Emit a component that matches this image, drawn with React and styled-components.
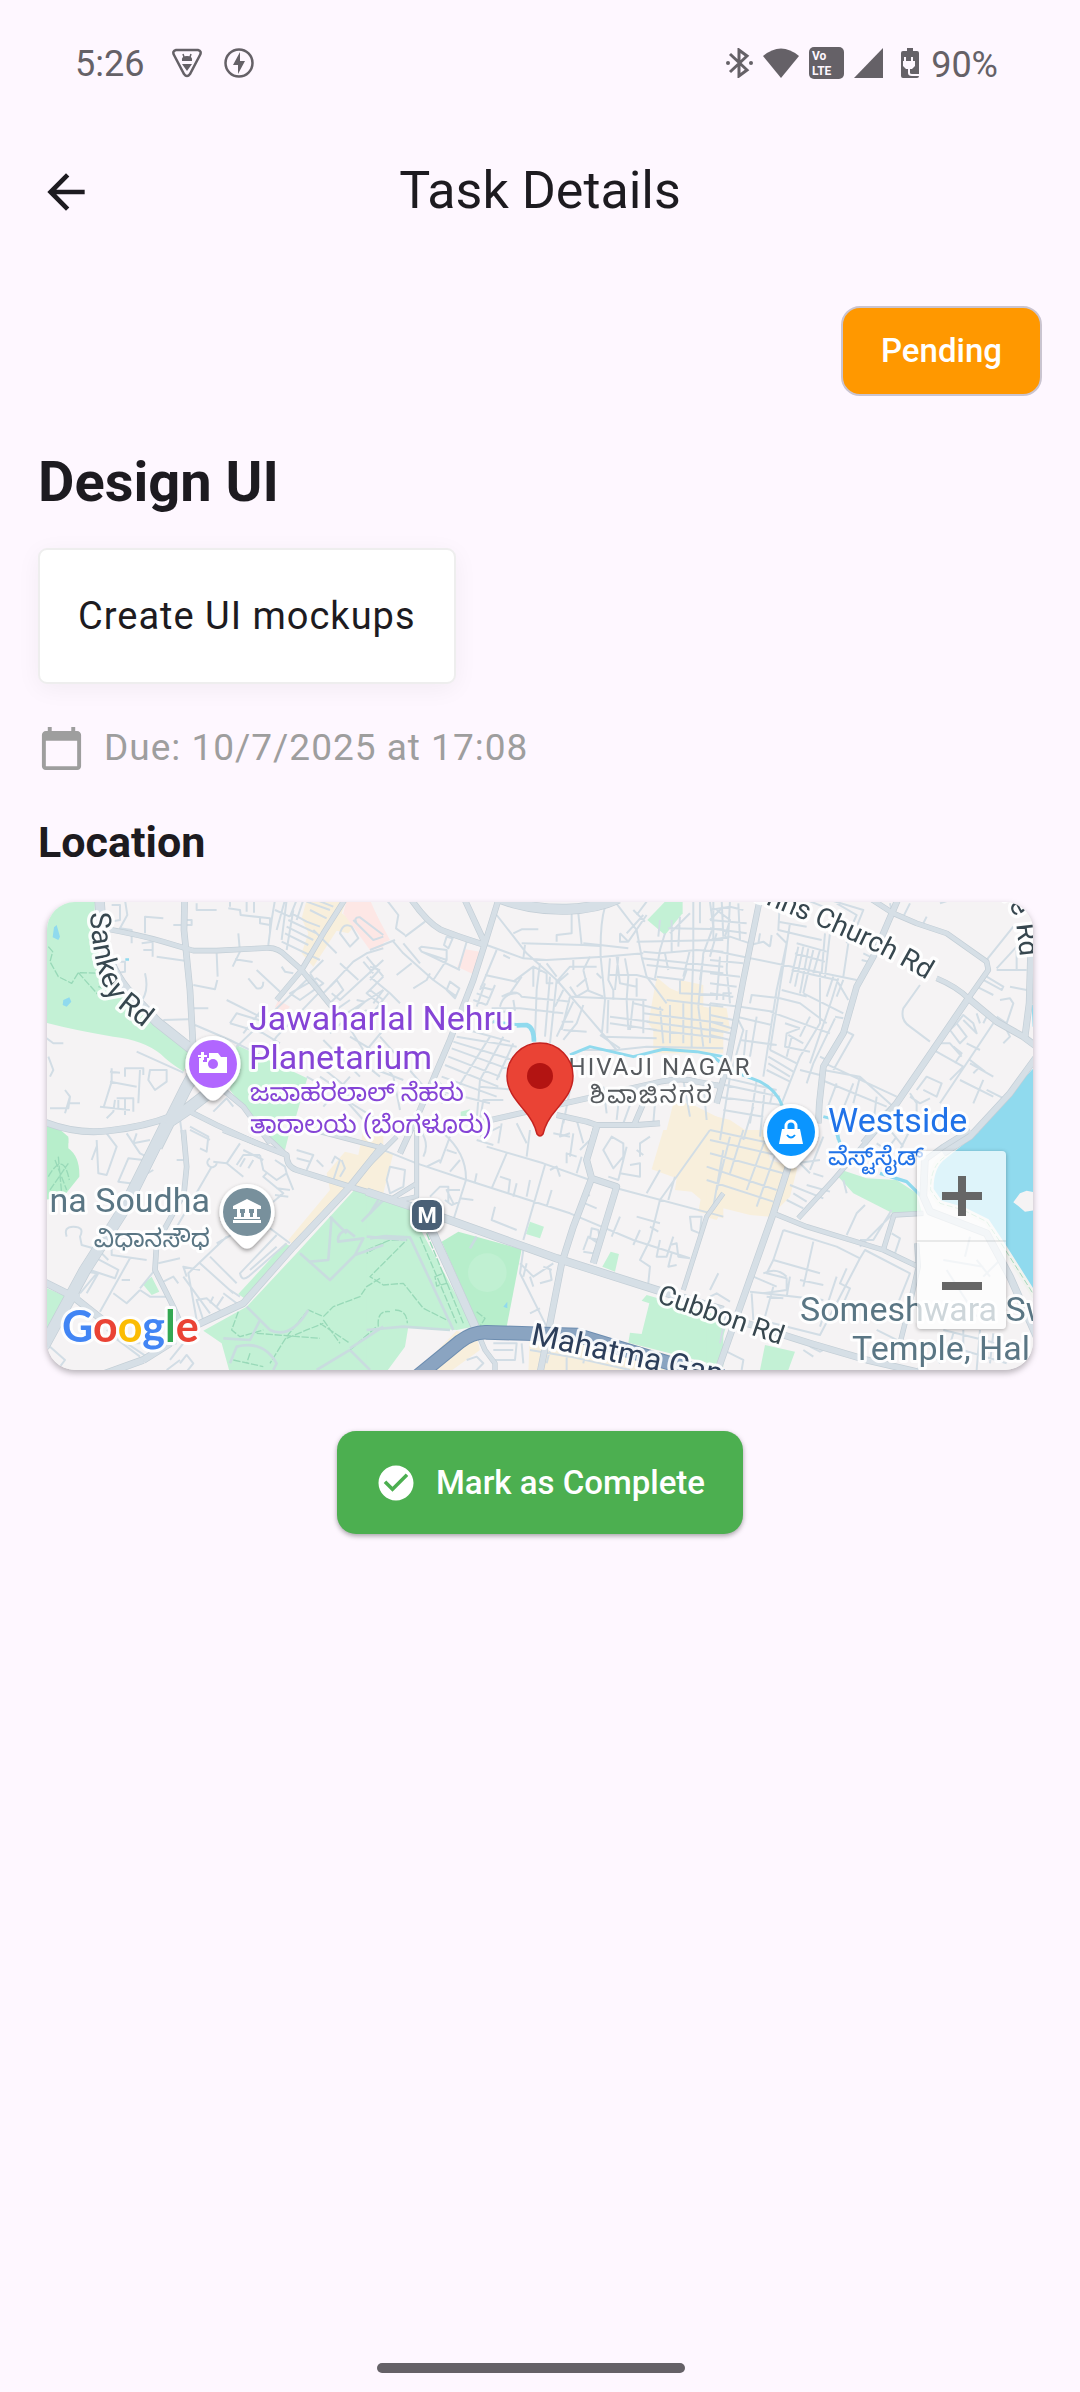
import React from "react";
import styled, { createGlobalStyle } from "styled-components";

const GlobalStyle = createGlobalStyle`
  * { box-sizing: border-box; }
  body {
    margin: 0;
    background: #fef7ff;
    color: #1d1b20;
    font-family: Roboto, "Noto Sans", "Liberation Sans", sans-serif;
  }
  h1, h2, h3, p { margin: 0; }
  button { font-family: inherit; border: 0; padding: 0; cursor: pointer; }
`;

const Screen = styled.div`
  min-height: 100vh;
  display: flex;
  flex-direction: column;
`;

const StatusBar = styled.div`
  display: flex;
  align-items: center;
  justify-content: space-between;
  height: 126px;
  padding: 0 82px 0 75px;
  color: #656167;
  font-size: 36px;
  line-height: 40px;
`;

const StatusGroup = styled.div`
  display: flex;
  align-items: center;
  gap: ${(p) => p.$gap}px;
`;

const Clock = styled.span`
  padding: 2px 6px 0 0;
`;

const BatteryLevel = styled.span`
  padding: 4px 0 0 2px;
`;

const AppBar = styled.header`
  display: grid;
  grid-template-columns: 56px 1fr 56px;
  align-items: center;
  height: 132px;
  padding: 0 38px;
`;

const IconButton = styled.button`
  display: flex;
  color: inherit;
  background: none;
`;

const Title = styled.h1`
  padding-bottom: 2px;
  font-size: 52px;
  line-height: 64px;
  font-weight: 400;
  text-align: center;
`;

const Content = styled.main`
  display: flex;
  flex-direction: column;
  align-items: flex-start;
  padding: 48px 38px;
`;

const StatusChip = styled.button`
  align-self: flex-end;
  padding: 23px 38px;
  border: 2px solid #cac4d0;
  border-radius: 19px;
  background: #ff9800;
  color: #fff;
  font-size: 33px;
  line-height: 40px;
  font-weight: 500;
`;

const TaskName = styled.h2`
  margin-top: 50px;
  font-size: 56px;
  line-height: 72px;
  font-weight: 700;
`;

const Description = styled.p`
  margin-top: 30px;
  padding: 38px;
  border: 2px solid #eee;
  border-radius: 9px;
  background: #fff;
  box-shadow: 0 5px 24px rgba(0, 0, 0, 0.05);
  font-size: 38px;
  line-height: 56px;
  letter-spacing: 1px;
`;

const DueRow = styled.p`
  display: flex;
  align-items: center;
  gap: 19px;
  margin-top: 36px;
  color: #9e9e9e;
  font-size: 37px;
  line-height: 56px;
  letter-spacing: 1px;
`;

const SectionTitle = styled.h3`
  margin-top: 38px;
  font-size: 43px;
  line-height: 56px;
  font-weight: 700;
`;

const MapShadow = styled.div`
  align-self: stretch;
  display: flex;
  flex-direction: column;
  filter: drop-shadow(0 3px 3px rgba(0, 0, 0, 0.28));
`;

const MapCard = styled.section`
  position: relative;
  height: 468px;
  margin: 32px 9px 0;
  overflow: hidden;
  border-radius: 28px;
  background: #f5f3f4;
`;

const MapSvg = styled.svg`
  display: block;
  width: 100%;
  height: 100%;
`;

const ZoomControl = styled.div`
  position: absolute;
  right: 27px;
  bottom: 41px;
  display: flex;
  flex-direction: column;
  width: 89px;
  border-radius: 4px;
  background: rgba(255, 255, 255, 0.7);
  box-shadow: 0 1px 4px rgba(0, 0, 0, 0.3);
`;

const ZoomButton = styled.button`
  display: flex;
  align-items: center;
  justify-content: center;
  height: 89px;
  background: none;
  color: #666;
  & + & { border-top: 2px solid rgba(120, 130, 130, 0.15); }
`;

const CompleteButton = styled.button`
  align-self: center;
  display: flex;
  align-items: center;
  gap: 19px;
  margin-top: 61px;
  padding: 0 38px;
  height: 103px;
  border-radius: 19px;
  background: #4caf50;
  box-shadow: 0 2px 5px rgba(0, 0, 0, 0.35);
  color: #fff;
  font-size: 33px;
  line-height: 48px;
  font-weight: 500;
`;

const HomeArea = styled.div`
  display: flex;
  justify-content: center;
  margin-top: auto;
  padding: 0 19px 19px 0;
`;

const HomeBar = styled.div`
  width: 308px;
  height: 10px;
  border-radius: 5px;
  background: #656167;
`;

const Halo = styled.text`
  paint-order: stroke;
  stroke: #fff;
  stroke-width: ${(p) => p.$halo || 6}px;
  stroke-opacity: 0.9;
  stroke-linejoin: round;
  font-family: ${(p) => p.$font || "Roboto"}, "Noto Sans", "Noto Sans Kannada", sans-serif;
  font-size: ${(p) => p.$size}px;
  font-weight: ${(p) => p.$weight || 400};
  letter-spacing: ${(p) => p.$track || 0}px;
  fill: ${(p) => p.$color};
`;

/* The map is drawn in six sectors, each at three units per pixel. */
const SECTORS = {
  nw: [-17, -12],
  n: [323, -12],
  ne: [663, -12],
  sw: [-17, 228],
  s: [323, 228],
  se: [663, 228],
};

const PARK = "#c3f1d5";
const PARK_DARK = "#b7eecb";
const SAND = "#f8efdc";
const PINK = "#fde7e5";
const WATER = "#90daee";

const AREAS = [
  ["nw", PARK, "M40 30H195L192 130L232 290L340 350L478 480L462 545Q420 520 392 492Q340 450 250 440Q130 420 40 396Z"],
  ["nw", PARK, "M620 465L832 565L795 690L665 685L600 600Z"],
  ["nw", PARK_DARK, "M40 712L80 722L115 745V760H40Z"],
  ["nw", SAND, "M830 30H950L935 70L980 100L955 130L920 122L850 230L815 190L835 130L815 85Z"],
  ["nw", PINK, "M950 30H1020L1060 120V170L1020 180L940 70Z"],
  ["nw", PINK, "M745 330L780 350L760 372L735 352Z"],
  ["nw", WATER, "M72 112L80 105L90 140L85 150L68 142ZM100 330L118 322L124 335L110 350L98 345ZM286 205H297V212H286Z"],
  ["n", PINK, "M0 38L60 150L0 175ZM285 178L330 185L308 252L262 230Z"],
  ["n", PARK, "M885 35H938V70L885 135L832 90Z"],
  ["n", PARK, "M272 665L300 658L290 690L272 680Z"],
  ["n", SAND, "M860 262L900 295L925 305L930 270L1000 285L1000 350L1060 360V490H850V420L835 400Z"],
  ["n", SAND, "M910 640L960 640L1060 690V760H880Z"],
  ["ne", SAND, "M-10 672L60 690L120 730L100 760H-10Z"],
  ["ne", SAND, "M0 345L50 355L60 420L0 450Z"],
  ["ne", WATER, "M980 525L890 620L780 760H980ZM965 345H975V410H968Z"],
  ["sw", PARK_DARK, "M40 -10H80L115 20V55Q150 80 148 140L100 200L40 210Z"],
  ["sw", PARK, "M700 20L780 0L765 60Z"],
  ["sw", PARK, "M365 440L388 485L365 495L338 462ZM40 470L110 500L80 580L40 625Z"],
  ["sw", SAND, "M945 65L985 75L1000 0H1060V190L960 180L800 355L775 330L900 180L890 130Z"],
  ["sw", PARK, "M765 340L785 350L650 510L625 492Z"],
  ["sw", PARK, "M975 178L1060 200V730H600L575 640L520 602L650 530L800 370Z"],
  ["s", SAND, "M-10 60L70 70L40 190L-10 200Z"],
  ["s", PARK, "M-10 190L120 240L310 590L260 600L115 590L105 650L50 725H-10Z"],
  ["s", PARK_DARK, "M215 335L265 305L455 358L410 590L330 595Z"],
  ["s", PARK, "M480 275L522 290L510 325L468 312ZM722 365L747 372L735 425L697 410Z"],
  ["s", SAND, "M880 0H1060V265L985 245L992 208L965 185L915 180L920 145L845 118Z"],
  ["s", PARK, "M830 495L900 515L1060 560V710L775 638L780 608L815 612L838 520L815 512Z"],
  ["s", SAND, "M480 600L600 598L780 640L1000 705L980 730H475ZM260 602L320 620L330 660L240 725H140Z"],
  ["s", WATER, "M412 515V535L400 530Z"],
  ["se", SAND, "M-10 0H165L180 90L262 115L240 200L180 260L120 255L40 235L20 270L-10 262Z"],
  ["se", PARK, "M395 120L470 145L560 150L620 190L635 245L545 248L430 190L385 140Z"],
  ["se", WATER, "M790 0H980V500L930 440L860 330L820 270L740 235L690 225L665 190L665 130L700 85Z"],
  ["se", PARK, "M0 585L48 590L10 715H-10V585ZM165 645L255 665L235 720H150Z"],
];

const MAJOR = [
  ["nw", 28, "M208 20L214 110Q225 220 290 300L380 395L500 490"],
  ["nw", 34, "M530 480L465 600L380 770M560 590L470 660L410 700"],
  ["nw", 18, "M40 695Q140 735 240 722Q350 708 420 680"],
  ["nw", 17, "M464 20L462 120L480 300L490 480"],
  ["nw", 14, "M220 115Q330 135 400 155L490 182H560L710 174Q745 172 770 200L815 240"],
  ["nw", 14, "M950 20L880 130L815 240L740 330M815 240L905 350"],
  ["nw", 14, "M460 655L560 705L680 760M580 600L640 650L720 760"],
  ["n", 16, "M125 30Q170 95 210 118Q250 135 345 165"],
  ["n", 16, "M280 20L345 160M385 30L345 160L310 270L240 450L150 660L90 790"],
  ["n", 30, "M390 25Q480 60 590 58Q680 55 745 25"],
  ["n", 15, "M340 695L450 670L620 632L850 580Q930 560 980 575L1060 590"],
  ["n", 15, "M560 675L650 695L680 705H800L870 700M680 705L665 760M820 640L790 710"],
  ["ne", 16, "M150 25L100 270L55 510L20 640"],
  ["ne", 17, "M565 25L490 200L440 290L400 430L340 530L328 640L325 700"],
  ["ne", 14, "M480 25L550 70L620 100L710 130L830 215L835 240L775 325M680 265Q740 290 775 325"],
  ["ne", 18, "M775 325L560 640L460 760M775 325L860 395L940 440L980 470"],
  ["ne", 18, "M962 200L958 340L945 440M980 500L900 610L780 740L700 790"],
  ["sw", 34, "M410 -20L280 240L165 420L40 650"],
  ["sw", 14, "M460 0L470 110L462 190L380 340L375 420L430 530L460 600"],
  ["sw", 15, "M580 0L770 75Q770 110 800 120L960 170L1060 200"],
  ["sw", 19, "M1060 45L960 170L790 350L640 520L490 590"],
  ["sw", 20, "M40 455L130 500L230 580M150 500L110 505M340 690L420 640M340 690L200 740"],
  ["sw", 12, "M700 10L770 75M850 0L1060 55"],
  ["s", 12, "M-10 110L80 20M140 0L140 200L70 215M140 160L60 210"],
  ["s", 22, "M-10 185L140 235L560 385L860 480L1060 540"],
  ["s", 24, "M170 270L230 400L320 600"],
  ["s", 18, "M680 -10L650 90L665 145L610 290L575 400L540 580L510 730M665 145L740 170L670 400"],
  ["s", 12, "M1060 190L1010 260L940 480"],
  ["s", 13, "M330 625L345 660L375 700V730"],
  ["se", 18, "M235 110L190 250L80 560L20 730"],
  ["se", 13, "M190 250L290 290L520 360L625 410L600 520L570 640M625 410L620 340"],
  ["se", 13, "M265 265L370 150L500 0M520 360L552 255L640 250"],
  ["se", 20, "M645 80L640 200L660 245L830 310L900 440L980 620"],
  ["se", 14, "M780 0L700 50L645 90"],
  ["se", 18, "M110 580L300 640L470 690L620 725"],
];

const MINOR = [
  ["nw", "M245 45H270V90L240 95M285 30L292 75L270 115L305 120V160M345 130V80L400 85M430 105H485V90H470M368 200V155L335 160M380 200L465 212M340 180H365M560 190L563 260M490 285L555 298L562 270M625 130L630 185L608 230M615 208L668 216M490 355H535M590 330L700 385M495 405L600 450L700 500M345 250Q360 310 325 345M400 390L475 388M320 485L460 548M360 540H410V575L375 600L355 570ZM245 535V575L220 655M240 545L270 548M285 560V535H340V555M240 575L320 590M330 540L325 640M260 625H310V665M255 630L250 665L230 685M210 650L300 660M285 625V675M265 630V660"],
  ["nw", "M600 50V30M595 55L630 60L632 75L720 85L720 125M650 30V65M672 30V68M690 85V100L720 105M735 30L725 90L715 165M765 30L740 120M800 30L780 80M785 70L830 95L870 110M775 90L860 130M770 110L850 150M765 130L835 165M755 155L870 210M830 35L900 60M860 30L910 50M840 60L890 85M820 30L800 90M770 30L755 150M850 120L920 190M790 60L770 180M735 60L780 80M965 110L985 145L960 170L930 130Q940 95 965 110ZM970 90L1030 150L1060 140M980 100Q970 80 990 82L1060 135M1060 175L1010 190L970 215L900 290M1010 200L1060 260M930 220L985 270M1000 215L1030 250M880 210L840 250M1060 210L930 330L905 310"],
  ["nw", "M600 400L620 370L720 400M600 400L700 430L750 460M655 265L680 295Q700 300 700 275M680 240L750 305M755 230L765 245L790 250M780 310L860 265L880 280L810 330ZM870 305L740 440L690 510M640 430L710 340M620 470L840 260M840 250L880 310L920 270L940 300L900 340M900 340L950 370L1060 300M980 330L1005 335L900 430M1000 480L950 400M910 365L960 330M1010 360L960 390M1020 300L1060 330M1060 260L1010 310L1060 350M1060 420L960 540M880 450L990 560M960 560L880 650M830 560L900 600L1060 700M860 520L960 600M800 620L860 640M960 440L1060 500M1000 520L1050 560M920 600L1000 690"],
  ["nw", "M105 600L120 620L105 670M120 620L115 655H60M120 640L150 640M55 500L70 540L60 560M50 445L70 460H100M550 665L590 625L610 650M480 720L540 750M450 690L460 760M500 40V60H560M250 215H285V245L255 250M260 290L290 300M870 560L960 620M470 600L520 570"],
  ["n", "M50 30L85 75L78 115L105 135M105 140L165 95M70 155L100 190L190 270L260 320M0 180L75 150M100 160L150 220M148 175L155 185L230 210L230 180L155 170ZM230 210L190 270M155 185L270 240M230 140L248 145L235 175L222 165ZM290 155L265 240M130 295L170 270L180 250M80 255L125 220M240 275L268 295L255 325L230 300ZM350 165L460 205M380 75L470 190L560 270L740 480M430 130L455 118H505M455 160L640 165L690 168M640 160L690 165L775 175M465 165L460 205L530 210L700 200L820 190M560 155V135L605 130V70M625 70L635 165M705 50Q690 100 692 200L705 330L695 440M735 35L800 120L815 200L830 260L890 340M750 130L775 155L830 75M750 130L750 155H775M830 35L800 75M820 75L770 130M790 60L825 95M970 30V200L965 340M885 130L870 180L855 265M0 260L60 310L90 340M15 225L0 250M40 300L10 340M55 310L15 360M0 230L28 240L0 270"],
  ["n", "M380 180L330 300M345 255L440 275M330 290L370 300M320 310L360 325M310 330L350 345M345 280L320 350M375 285L350 345M400 195L420 205M455 260L420 310M430 275L490 230L490 290M395 320Q440 295 455 320L550 330M390 350Q400 310 440 310M430 330L435 360L370 370M365 355L450 355L580 370M395 370L365 400M510 220L500 300L495 440M540 260L525 440M560 270L540 460M490 230L530 250V280H550M530 220L560 260M580 300L555 350M600 320L575 420M560 330L600 335M575 395L610 395M580 420L650 425M650 300L700 320M640 240L655 300L620 320L600 290M560 275L600 230H680M595 250L560 280M610 210V240M650 265L620 290M680 250L695 265M605 320L830 330M660 200L640 240M720 205L715 270L730 300V330M745 200L735 300M765 205L775 260L770 330M800 265V320M715 255H800L860 270M740 200L750 280L800 290M715 330L712 430M770 330L775 420M790 330L780 420M820 330V430M700 440L860 445M690 435L750 475M720 400L860 420M720 380L840 395M610 335L560 440M640 345L620 400L580 450"],
  ["n", "M800 155L1060 150M820 185L870 190L980 180L1060 185M815 205L1060 230M830 225L1060 250M905 90V190M930 80L925 170M870 90L865 140M900 130L960 70M895 115L1060 118M990 30V100M1020 35L1030 110L1000 190L985 350M1060 50L1020 90M1040 130L1020 200M885 190L895 240M860 260L940 270L950 240M930 270V310L1060 315M960 180L940 260M1000 200L990 270M890 330L1060 350M870 350L880 460M790 340L880 360M820 370L1060 400M830 395L1060 425M850 420L1060 445M900 345V460M940 340V460M965 340V470M985 350L1000 470M1020 340V460M640 480L740 480L830 470L1060 475M260 440L440 470M275 415L420 455M250 455L430 510M245 475L410 535M235 500L390 560M225 525L385 590M215 560L380 620M200 600L360 640M360 440L240 630M400 440L330 570L320 690M430 460L380 570M330 690L340 630H400M330 590L440 600L560 610M590 570V510M550 610L600 540M700 590L710 670M750 600L740 690M800 590L760 700M860 580L850 700M600 600L580 700M940 570L960 680M1000 580L1010 690M10 480L70 560L90 660M20 540L100 570M190 560L230 600L215 640M30 440L110 530L170 600M580 690L570 740L600 730M620 690L640 760M500 620L480 670M440 700L470 760M395 700L385 760M390 710L330 740"],
  ["ne", "M0 60L60 50L100 60M0 90L110 100M10 30V150M35 30L40 140M60 30L50 240M85 40L90 150M0 115L110 130M0 180L440 270M0 150L60 140L120 160M20 60L60 90L45 140M120 165L160 155L180 170M145 160L150 130M180 170L185 135M0 210L100 220M0 250L90 260M0 280L80 290M0 310L70 320M50 240L60 340M30 200L20 330M0 340L90 350M40 330V310H65M0 375L70 390M0 395L65 415M0 415L60 430M0 435L60 450M90 350L190 365M80 380L185 405M210 30L205 120L290 140L335 150M205 95L290 110M200 130L230 160L200 300L160 560M240 100L180 480M290 60V30L340 50M345 130L335 250M360 130L345 260M415 160L400 260M360 30L460 60L440 110M380 40L440 75L420 120L410 160M265 170L240 280M280 170L255 290M295 175L270 310M310 180L280 310M330 180L310 250M260 160L350 185M255 190L345 215M245 240L380 270L415 330M215 300L290 320M280 310L360 350L400 370M370 260L350 320M385 265L365 330M400 270L380 320M330 250L330 400L270 500L215 640M365 330L300 520M120 340L125 315L210 325L270 340L350 400M90 450L200 465M180 365L360 430M225 400L270 415M270 415L230 430L225 470L300 485M235 435L280 460M245 440L230 500M300 380L270 440M375 380L400 385M375 385L310 520L290 580"],
  ["ne", "M410 425L430 435L370 540M410 425L350 510L330 500M345 520L560 620M340 540L450 560L550 650M335 570L530 650M270 540L330 555M180 480L260 520M175 500L250 545M175 520L240 560M170 540L240 575M30 560L200 600M20 580L210 620M20 620L215 645M140 570L120 700M165 590L150 740M60 560L30 750M190 600L180 640M85 390L100 420L60 560M110 420L95 560M140 380L120 500M40 660L160 680M130 650L100 750M380 580L350 660M430 580L390 680M500 620L490 700M450 560L430 640M540 650L500 690M440 690L520 700M630 285L580 355Q570 390 600 410L660 455M670 480L760 530M730 470L755 490L735 520M690 460L720 460L755 500M770 460L810 480M740 400L760 375L790 400L800 430L760 390M720 420L740 400L770 440L750 460ZM850 400L690 640M760 530L720 570M780 510L825 545M790 550L810 530M750 570L850 620M820 570L790 640M830 600L890 630M620 600L650 560L695 580L680 620L640 600M600 620L630 640L660 625M600 610L620 640V690M800 370L810 400M830 380L820 400M890 420L900 440L880 460M870 330L900 325L910 340L890 400L860 380M900 290L950 300M830 210L910 110M860 235L920 170L960 100M860 240H950M830 260L880 290L875 300L820 270M800 290L850 315M920 180V240M690 40L720 30M650 80L640 100M600 40L580 80M550 80L540 40M460 190L480 200M455 210L475 215M780 520L850 560"],
  ["sw", "M200 30L205 130L230 135L260 50L230 10M290 10L330 70L350 80M320 10L310 40L360 30M340 90L295 85L265 155L300 160L370 120M185 90L200 50M440 90H460M480 -10L535 20L530 65L510 55M550 95L590 100L640 140M630 40L590 100M545 110L435 300M540 85A14 14 0 1 0 560 95M620 105L640 75L690 75M640 60L700 90M630 110L645 85M655 115L670 90M690 75L700 120L740 150L770 130L765 110L735 90M710 130L700 140L760 190L730 215M770 130L790 180M740 175L780 180M735 195L775 200M800 60L850 75L830 120M860 90L880 110M800 85L840 95M905 100L915 80L930 90L910 150M935 90L945 115L930 140M110 320Q100 290 130 290Q165 290 150 320L155 345L190 355M245 330V375L350 390M215 370L235 390M190 380L265 420L255 445L180 420ZM300 385L210 545M205 430L170 490M275 450L300 450M150 490L200 430L170 425M385 400L450 385M390 460L430 440L445 460M330 475L375 420M330 480L360 500L410 500"],
  ["sw", "M590 320L475 430L500 570M470 440L460 410L510 420M560 340L700 260M510 400L610 490M540 380L620 460M460 440L540 550M500 510L530 505L580 550L520 570ZM540 520L550 500M560 530L580 500M580 490L620 520M600 480L630 500M740 315L630 430Q635 455 655 440L770 340M660 420L740 350M720 295L780 340M250 490L290 520L330 480M230 600L350 680M310 640L380 640M420 690L460 640M250 620L330 680M60 650L105 690L90 710M450 700L470 675L490 700L470 725M410 720L450 690M420 645L440 640"],
  ["s", "M-10 40L140 100L290 150L430 195L600 250L790 330L960 385M350 50L520 100L660 150M220 10Q290 70 288 150L250 270M410 70L365 175M470 80L480 0M525 105L460 330M150 0Q180 40 160 80M210 100L240 20M60 110L105 120L100 170L60 190L50 150ZM210 90L170 110M240 125L270 90M230 60L260 70M320 30L370 45M250 220L230 180H270M235 220V170H210L180 200M270 215L245 225L225 210M270 205L310 210M315 155L320 130M375 230L365 270L440 300M390 140L420 150L415 190M430 200L440 160M470 200L480 150M540 120L560 110L570 140M590 100V70L620 80M530 230L545 180M600 20L550 10M600 80L610 10M620 130L635 80M660 30L630 60M700 60L725 20L760 40V80L730 115ZM715 140L745 150L770 50M750 130L810 140V100L780 105M810 80V40L840 20M820 75L800 60M870 120L830 190M1020 0L870 210L840 330L810 390L840 410L835 460M915 140L895 210M740 175L1060 260M645 200L660 195M645 220L680 235M800 260L870 280M840 290L865 305M810 300L790 345M750 260L725 320M870 330L860 380H890L910 320M960 385L925 380L920 340L900 345M905 370L895 410L920 405M960 260H995L990 310L965 300ZM665 295L685 300L690 330L660 325ZM640 360L655 320L685 340L670 370L640 365M460 360L450 430L530 590M450 400L490 440L550 400M470 400L460 440M520 410L545 420M510 460L545 450L540 420M480 440L490 470M480 550L510 535M370 640H440L435 690L375 690M370 660H430M290 690L320 680L340 700L310 730M455 640L460 700M480 660L600 680L780 720M590 680V720M540 660L530 700M650 640L640 700"],
  ["se", "M60 20L20 180M100 0L60 130M165 30L110 180M200 60L140 230M0 70L220 130M-10 110L200 180M-10 150L190 215M0 30L220 80M0 0L230 50M40 60L10 230M300 130L270 100M250 190L290 215M240 165L340 205M230 210L280 235M290 165L360 185M310 130L340 140M300 120L340 20M260 100L330 90M400 150L410 190M550 250L450 350M545 240L490 330L450 330M545 310L570 325L555 370L530 360M410 315L440 250L465 225M220 300L190 390L330 430M220 300L380 350L450 385L465 360L600 430L560 530M310 335L280 470M450 385L330 615L150 570M190 390L170 430L230 445V480L160 490M130 440L200 470M120 485L340 510M190 470L165 560M240 440L230 500M160 430Q200 410 230 440M125 490L130 570M270 450L340 465M410 415L390 460L420 475L400 520M330 590L380 440M170 500L220 505M60 515L20 490L0 500M0 480L25 430M50 540L30 640M300 650L330 665L360 650M280 660L310 680M80 680L100 690L95 720M40 660L80 680M730 610L710 680M700 600L860 640M690 640L890 700M760 600V700M810 600L800 720M850 610L840 700M660 680L620 720M650 640L690 700M500 600L620 660M780 320L765 380M700 390L820 410M800 390L840 440M870 390L820 440M710 420L800 560M560 20L530 60L500 40M540 0L580 50M600 0L570 60"],
];

const TRAILS = [
  ["nw", "M55 170L68 185L60 215L85 260L125 280L145 248L215 250M145 248L205 315L235 285M205 290L240 300"],
  ["sw", "M55 140Q100 60 118 150M75 90L110 180M60 180L115 100M85 80L95 190"],
  ["sw", "M1050 445L1010 470L990 500L910 530L880 560L835 540M835 540L770 620L720 700M870 580L960 640M960 660L1040 590M1060 340L1010 370M625 545L605 600L630 620L700 600M680 610L870 625M610 690L700 710M660 670L650 700M770 625L830 600L880 580M880 570L930 640"],
  ["s", "M-10 360L60 330H110L0 440L40 465L100 460L160 535L240 575M150 320L260 580M170 310L280 580M195 440L220 430L230 460L200 468ZM25 590Q20 540 60 545M75 540Q110 540 112 580M320 545L345 565L330 590"],
];

const PARK_ROADS = [
  ["sw", "M810 370L900 450L975 375L1060 345M840 395L895 390L905 260M900 260L950 310M975 375L1000 325L925 335Q920 310 950 300L975 320M995 275L1060 210M650 530L690 570L720 600Q780 630 835 540M690 570L660 630L580 625M600 700L620 650Q700 630 740 700L730 720M960 660L860 720M960 655L1060 590M960 660L1020 720"],
  ["s", "M0 325L45 318L120 322L250 600M-10 600L100 590L240 600M25 210L0 250M320 320L300 355M-10 320L110 330"],
];

const CANALS = [
  ["n", 14, "M440 406L470 405Q492 412 492 455"],
  ["n", 9, "M370 395L450 405M600 495L660 470L790 500L880 478L980 485L1060 500"],
  ["ne", 9, "M0 492L60 540L150 575Q200 600 218 650M340 680L380 690L385 750"],
  ["se", 10, "M380 10L400 70M510 130L590 155L635 200"],
];

function Sector({ at, children }) {
  const [x, y] = SECTORS[at];
  return <g transform={`translate(${x} ${y}) scale(0.3333)`}>{children}</g>;
}

const strokes = (list, stroke, width, extra = {}) =>
  list.map(([at, d], i) => (
    <Sector key={i} at={at}>
      <path d={d} fill="none" stroke={stroke} strokeWidth={width} strokeLinejoin="round" {...extra} />
    </Sector>
  ));

const wide = (list, stroke, grow = 0) =>
  list.map(([at, w, d], i) => (
    <Sector key={i} at={at}>
      <path d={d} fill="none" stroke={stroke} strokeWidth={w + grow} strokeLinejoin="round" />
    </Sector>
  ));

function Pin({ x, y, color, children }) {
  return (
    <g transform={`translate(${x} ${y})`}>
      <path
        d="M0 -28A28 28 0 0 1 21 18Q12 28 6 34Q0 39 -6 34Q-12 28 -21 18A28 28 0 0 1 0 -28Z"
        fill="#fff"
        filter="url(#pinShadow)"
      />
      <circle r="24" fill={color} />
      {children}
    </g>
  );
}

function CityMap() {
  return (
    <MapSvg viewBox="0 0 986 468" preserveAspectRatio="xMidYMid slice" role="img" aria-label="Map of Shivaji Nagar">
      <defs>
        <filter id="pinShadow" x="-30%" y="-30%" width="160%" height="160%">
          <feDropShadow dx="0" dy="2" stdDeviation="2" floodOpacity="0.4" />
        </filter>
      </defs>
      <rect width="986" height="468" fill="#f5f3f4" />
      {AREAS.map(([at, fill, d], i) => (
        <Sector key={i} at={at}>
          <path d={d} fill={fill} />
        </Sector>
      ))}
      <Sector at="s">
        <circle cx="352" cy="428" r="58" fill="#c0f0d2" />
      </Sector>
      <Sector at="se">
        <path d="M910 217L930 190L950 182L980 188V240L945 245L925 228Z" fill="#f5f3f4" />
        <path
          d="M800 0L700 80Q660 110 662 180L690 220L760 240L830 275L880 350L975 500"
          fill="none" stroke="#f0f2ee" strokeWidth="18"
        />
        <path
          d="M805 0L705 80Q660 110 662 180L690 220L760 240L830 275L880 350L975 500"
          fill="none" stroke="#a9d8bb" strokeWidth="3" strokeDasharray="18 8"
        />
      </Sector>
      {strokes(TRAILS, "#98d9b8", 4, { strokeDasharray: "22 5" })}
      {strokes(PARK_ROADS, "#c9dcdf", 8)}
      {strokes(MINOR, "#d2dde5", 6)}
      {wide(CANALS, WATER)}
      {wide(MAJOR, "#c3ced6", 3)}
      {wide(MAJOR, "#d6dfe6", -1)}
      <Sector at="s">
        <path d="M135 745L270 635Q310 605 350 607L620 615L900 700L1060 740" fill="none" stroke="#6d8db0" strokeWidth="44" />
        <path d="M135 745L270 635Q310 605 350 607L620 615L900 700L1060 740" fill="none" stroke="#8aa4c1" strokeWidth="38" />
      </Sector>

      <Sector at="nw">
        <path id="sankey" d="M180 68Q187 200 214 268Q232 320 258 348L375 440" fill="none" />
        <Halo $size={87} $halo={20} $color="#37474f"><textPath href="#sankey">Sankey Rd</textPath></Halo>
      </Sector>
      <Sector at="ne">
        <path id="church" d="M40 -10L300 97Q500 180 650 270" fill="none" />
        <Halo $size={83} $halo={20} $color="#37474f" textAnchor="end">
          <textPath href="#church" startOffset="100%">Johns Church Rd</textPath>
        </Halo>
        <path id="grove" d="M850 0Q915 50 920 110L930 200" fill="none" />
        <Halo $size={83} $halo={20} $color="#37474f" textAnchor="end">
          <textPath href="#grove" startOffset="100%">ve Rd</textPath>
        </Halo>
      </Sector>
      <Halo $size={27} $color="#37474f" transform="translate(609 400) rotate(19)">Cubbon Rd</Halo>
      <Halo $size={31} $color="#2c3e5a" transform="translate(483 442) rotate(12)">Mahatma Gan</Halo>

      <Halo $size={34} $color="#8544d6" x="202" y="128">Jawaharlal Nehru</Halo>
      <Halo $size={34} $color="#8544d6" x="202" y="167">Planetarium</Halo>
      <Halo $size={25} $color="#8544d6" x="203" y="199">ಜವಾಹರಲಾಲ್ ನೆಹರು</Halo>
      <Halo $size={25} $color="#8544d6" x="203" y="231">ತಾರಾಲಯ (ಬೆಂಗಳೂರು)</Halo>
      <Halo $size={24} $color="#565a5e" $track={2} x="605" y="173" textAnchor="middle">SHIVAJI NAGAR</Halo>
      <Halo $size={24} $color="#565a5e" $track={2} x="605" y="201" textAnchor="middle">ಶಿವಾಜಿನಗರ</Halo>
      <Halo $size={34} $color="#2072e8" x="781" y="230">Westside</Halo>
      <Halo $size={25} $color="#2072e8" x="781" y="263">ವೆಸ್ಟ್‌ಸೈಡ್</Halo>
      <Halo $size={34} $color="#5a7684" x="163" y="310" textAnchor="end">na Soudha</Halo>
      <Halo $size={25} $color="#5a7684" x="163" y="345" textAnchor="end">ವಿಧಾನಸೌಧ</Halo>
      <Halo $size={34} $color="#5a7684" x="753" y="419">Someshwara Sw</Halo>
      <Halo $size={34} $color="#5a7684" x="805" y="458">Temple, Hal</Halo>

      <Pin x={166} y={162} color="#b166ff">
        <path
          d="M-14 -6H-10V-2H-6V-6H-4V-11H5L8 -7H14V9H-14ZM-12 -12H-9V-9H-6V-7H-9V-4H-12V-7H-15V-9H-12Z"
          fill="#fff"
        />
        <circle r="5" cy="0" fill="#b166ff" />
      </Pin>
      <Pin x={200} y={310} color="#78909c">
        <path d="M0 -13L14 -6V-3H10V5H13V7H-13V5H-10V-3H-14V-6ZM-14 8H14V11H-14Z" fill="#fff" />
        <path d="M-7 -3H-2V1H-3V5H-6V1H-7ZM2 -3H7V1H6V5H3V1H2Z" fill="#78909c" />
      </Pin>
      <Pin x={744} y={230} color="#0a95ff">
        <path d="M-9 -3H9L12 12H-12Z" fill="#fff" />
        <path d="M-5 -2V-6A5 5 0 0 1 5 -6V-2" fill="none" stroke="#fff" strokeWidth="3" />
        <path d="M-4 3Q0 8 4 3" fill="none" stroke="#0a95ff" strokeWidth="2" />
      </Pin>
      <g transform="translate(380 313)">
        <rect x="-17" y="-17" width="34" height="34" rx="11" fill="#fff" filter="url(#pinShadow)" />
        <rect x="-15" y="-15" width="30" height="30" rx="9" fill="#4a6076" />
        <text y="8" textAnchor="middle" fill="#fff" fontFamily="Roboto, sans-serif" fontSize="22" fontWeight="700">M</text>
      </g>
      <g transform="translate(493 174)">
        <path
          d="M0 -33A33 33 0 0 1 33 0C33 14 25 23 16 34C9 42 5 49 3 58Q0 62 -3 58C-5 49 -9 42 -16 34C-25 23 -33 14 -33 0A33 33 0 0 1 0 -33Z"
          fill="#ea4335" stroke="#c5221f" strokeWidth="1.5"
        />
        <circle r="13" fill="#b31412" />
      </g>
      <Halo $size={43} $weight={700} $font="Lato" $color="#4285f4" x="15" y="440">
        G<tspan fill="#ea4335">o</tspan><tspan fill="#fbbc04">o</tspan>
        <tspan fill="#4285f4">g</tspan><tspan fill="#34a853">l</tspan><tspan fill="#ea4335">e</tspan>
      </Halo>
    </MapSvg>
  );
}

function StatusIcons() {
  return (
    <StatusGroup $gap={10}>
      <svg width="27" height="30" viewBox="0 0 27 30" fill="none" stroke="currentColor" strokeWidth="3">
        <path d="M4 6L21 22L13 28V2L21 8L4 24" />
        <circle cx="2" cy="15" r="2" fill="currentColor" stroke="none" />
        <circle cx="25" cy="15" r="2" fill="currentColor" stroke="none" />
      </svg>
      <svg width="36" height="30" viewBox="0 0 36 30" fill="currentColor">
        <path d="M18 30L0 8Q18 -7 36 8Z" />
      </svg>
      <svg width="35" height="32" viewBox="0 0 35 32">
        <rect width="35" height="32" rx="5" fill="currentColor" />
        <g fill="#fef7ff" fontFamily="Roboto, sans-serif" fontSize="12" fontWeight="700">
          <text x="3" y="13">Vo</text>
          <text x="3" y="28">LTE</text>
        </g>
      </svg>
      <svg width="37" height="30" viewBox="0 0 37 30" fill="currentColor">
        <path d="M0 30L29 0V30Z" />
      </svg>
      <svg width="18" height="30" viewBox="0 0 18 30">
        <path d="M6 0H12V3H16Q18 3 18 5V28Q18 30 16 30H2Q0 30 0 28V5Q0 3 2 3H6Z" fill="currentColor" />
        <path d="M4 9V13M11 9V13" stroke="#fef7ff" strokeWidth="2" />
        <path d="M2 13H14V18L11 21H5L2 18Z" fill="#fef7ff" />
        <path d="M8 20V25Q8 27 11 27H18" fill="none" stroke="#fef7ff" strokeWidth="2" />
      </svg>
      <BatteryLevel>90%</BatteryLevel>
    </StatusGroup>
  );
}

export default function App() {
  return (
    <Screen>
      <GlobalStyle />
      <StatusBar>
        <StatusGroup $gap={22}>
          <Clock>5:26</Clock>
          <svg width="30" height="30" viewBox="0 0 30 30">
            <path
              d="M4 2H26Q30 3 28 7L18 26Q15 30 12 26L2 7Q0 3 4 2Z"
              fill="none" stroke="currentColor" strokeWidth="2.5"
            />
            <path d="M11 6L12 9M19 6L18 9" stroke="currentColor" strokeWidth="1.5" />
            <path d="M10 13Q9 8 15 8Q21 8 20 13ZM10 16H20L15 23Z" fill="currentColor" />
          </svg>
          <svg width="30" height="30" viewBox="0 0 30 30">
            <circle cx="15" cy="15" r="13.5" fill="none" stroke="currentColor" strokeWidth="2.5" />
            <path d="M16 4L9 17H14V26L21 13H16Z" fill="currentColor" />
          </svg>
        </StatusGroup>
        <StatusIcons />
      </StatusBar>

      <AppBar>
        <IconButton aria-label="Back">
          <svg width="56" height="56" viewBox="0 0 24 24" fill="currentColor">
            <path d="M20 11H7.83l5.59-5.59L12 4l-8 8 8 8 1.41-1.41L7.83 13H20v-2z" />
          </svg>
        </IconButton>
        <Title>Task Details</Title>
      </AppBar>

      <Content>
        <StatusChip>Pending</StatusChip>
        <TaskName>Design UI</TaskName>
        <Description>Create UI mockups</Description>
        <DueRow>
          <svg width="47" height="47" viewBox="0 0 24 24" fill="currentColor">
            <path d="M20 3h-1V1h-2v2H7V1H5v2H4c-1.1 0-2 .9-2 2v16c0 1.1.9 2 2 2h16c1.1 0 2-.9 2-2V5c0-1.1-.9-2-2-2zm0 18H4V8h16v13z" />
          </svg>
          Due: 10/7/2025 at 17:08
        </DueRow>
        <SectionTitle>Location</SectionTitle>
        <MapShadow>
          <MapCard>
            <CityMap />
            <ZoomControl>
              <ZoomButton aria-label="Zoom in">
                <svg width="40" height="40" viewBox="0 0 40 40" stroke="currentColor" strokeWidth="8">
                  <path d="M0 20H40M20 0V40" />
                </svg>
              </ZoomButton>
              <ZoomButton aria-label="Zoom out">
                <svg width="40" height="40" viewBox="0 0 40 40" stroke="currentColor" strokeWidth="8">
                  <path d="M0 20H40" />
                </svg>
              </ZoomButton>
            </ZoomControl>
          </MapCard>
        </MapShadow>
        <CompleteButton>
          <svg width="42" height="42" viewBox="0 0 24 24" fill="currentColor">
            <path d="M12 2C6.48 2 2 6.48 2 12s4.48 10 10 10 10-4.48 10-10S17.52 2 12 2zm-2 15l-5-5 1.41-1.41L10 14.17l7.59-7.59L19 8l-9 9z" />
          </svg>
          Mark as Complete
        </CompleteButton>
      </Content>
      <HomeArea>
        <HomeBar />
      </HomeArea>
    </Screen>
  );
}
